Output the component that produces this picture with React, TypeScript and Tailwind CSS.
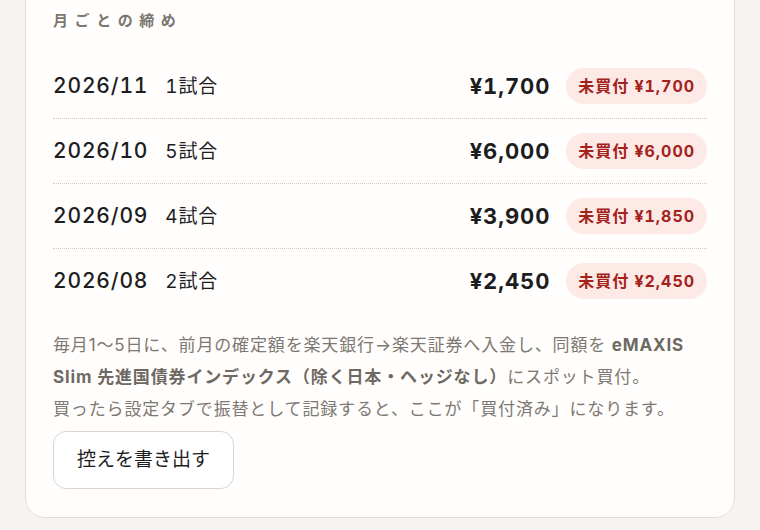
const rows = [
  { month: "2026/11", games: "1試合", total: "¥1,700", unpaid: "¥1,700" },
  { month: "2026/10", games: "5試合", total: "¥6,000", unpaid: "¥6,000" },
  { month: "2026/09", games: "4試合", total: "¥3,900", unpaid: "¥1,850" },
  { month: "2026/08", games: "2試合", total: "¥2,450", unpaid: "¥2,450" },
];

export default function App() {
  return (
    <div className="min-h-[530px] bg-[#f5f4f1] px-[25px] pb-[13px] font-['Inter','Noto_Sans_CJK_JP',sans-serif] overflow-hidden">
      <section className="-mt-[20px] rounded-[20px] border border-[#e2dfda] bg-[#fffefd] px-[27px] pt-[27px] pb-[28px]">
        <h2 className="text-[15px] font-bold leading-[26px] tracking-[0.44em] text-[#7b766f]">
          月ごとの締め
        </h2>

        <ul className="mt-[20px]">
          {rows.map((r, i) => (
            <li
              key={r.month}
              className={
                "flex items-center justify-between py-[14px] " +
                (i < rows.length - 1 ? "border-b border-dotted border-[#cfccc6]" : "")
              }
            >
              <div className="flex items-baseline gap-[17px] text-[#1d1d1d] tabular-nums">
                <span className="text-[21px] font-medium tracking-[0.04em]">{r.month}</span>
                <span className="text-[19px] tracking-[0.04em]">{r.games}</span>
              </div>
              <div className="flex items-center gap-[16px] tabular-nums">
                <span className="text-[22px] font-bold tracking-[0.04em] text-[#1d1d1d]">{r.total}</span>
                <span className="flex h-[36px] items-center rounded-full bg-[#fdeae7] px-[12px] text-[16px] font-bold tracking-[0.06em] text-[#a3221b]">
                  未買付 {r.unpaid}
                </span>
              </div>
            </li>
          ))}
        </ul>

        <p className="mt-[16px] text-[17px] leading-[32px] tracking-[0.05em] text-[#7d7871]">
          毎月1〜5日に、前月の確定額を楽天銀行→楽天証券へ入金し、同額を{" "}
          <b className="font-bold text-[#6e6962]">eMAXIS</b>
          <br />
          <b className="font-bold text-[#6e6962]">Slim 先進国債券インデックス（除く日本・ヘッジなし）</b>
          にスポット買付。
          <br />
          買ったら設定タブで振替として記録すると、ここが「買付済み」になります。
        </p>

        <button className="mt-[6px] h-[58px] rounded-[13px] border border-[#d9d6d0] bg-white px-[23px] text-[19px] text-[#1d1d1d]">
          控えを書き出す
        </button>
      </section>
    </div>
  );
}
